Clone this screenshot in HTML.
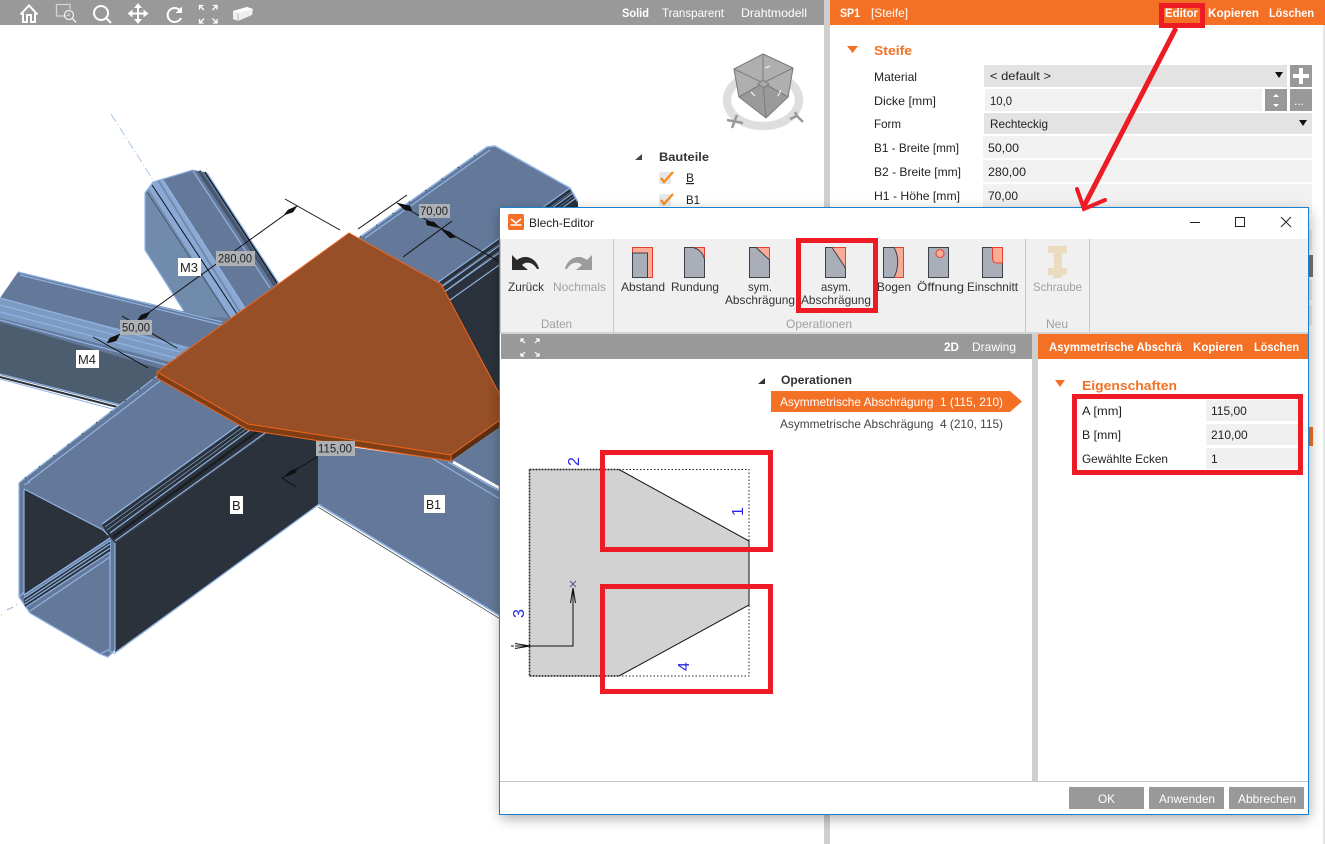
<!DOCTYPE html>
<html lang="de">
<head>
<meta charset="utf-8">
<title>Blech-Editor</title>
<style>
html,body{margin:0;padding:0;background:#fff;width:1325px;height:844px;overflow:hidden}
svg{display:block;position:absolute;left:0;top:0}
text{font-family:"Liberation Sans",sans-serif;font-size:12px;fill:#222;white-space:pre}
.w{fill:#fff}
.b{font-weight:bold}
.g{fill:#a0a0a0}
.o{fill:#f47025;font-weight:bold;font-size:13px}
.n{fill:#2424e6;font-size:16px}
.l{stroke:#8fb3e3;stroke-width:1.2;fill:none}
.d{stroke:#111;stroke-width:1;fill:none}
.r{fill:none;stroke:#ed1c24}
.ic{stroke:#3c4048;stroke-width:1;fill:#a9aeb8}
.h{fill:#f9ab96;stroke:#e8402f;stroke-width:1}
</style>
</head>
<body>
<svg width="1325" height="844" viewBox="0 0 1325 844" xmlns="http://www.w3.org/2000/svg">
<defs>
<filter id="s" x="-10%" y="-10%" width="120%" height="120%"><feGaussianBlur stdDeviation="7"/></filter>
</defs>
<rect width="1325" height="844" fill="#fff"/>

<!-- 3D scene -->
<g>
<!-- M3 -->
<path d="M145 193L153 182L193 170L205 172L280 287L240 325L187 316L150 258L145 250Z" fill="#64799a"/>
<path d="M145 193L148 188L232 318L187 316L150 258L145 250Z" fill="#708bab"/>
<path d="M148 188L153 182L163 180L245 308L232 320Z" fill="#8ba9d4"/>
<path d="M158 180L240 312" stroke="#708bab" stroke-width="2"/>
<path d="M145 250V193L153 182L193 170" class="l" stroke-width="1.500"/>
<path d="M145 250L187 316" class="l"/>
<path d="M152 185L237 314" stroke="#10151c" stroke-width="1"/>
<path d="M147 192L231 320" stroke="#3c4a5e" stroke-width=".7"/>
<path d="M163 180L245 308" class="l"/>
<path d="M193 171L270 288" class="l" stroke-width="1.500"/>
<path d="M199 171L275 285" stroke="#46566c" stroke-width="3.500"/>
<path d="M205 172L277 283" stroke="#10151c" stroke-width="1.500"/>
<path d="M207 173L280 285" class="l"/>

<!-- M4 -->
<path d="M18 272L228 322L160 372L0 322L0 298Z" fill="#64799a"/>
<path d="M0 298L190 347L170 362L0 318Z" fill="#7d9ac3"/>
<path d="M0 298L185 348M0 305L180 352M0 312L176 358M0 320L170 366" class="l"/>
<path d="M18 272L222 322M20 275L222 325" class="l"/>
<path d="M0 322L165 370L125 407L0 375Z" fill="#4c5d70"/>
<path d="M0 374L125 406" stroke="#8fb3e3" stroke-width="1.200"/>
<path d="M0 377L125 409" stroke="#2b323b" stroke-width="2"/>
<path d="M0 379L120 411" stroke="#8fb3e3" stroke-width="1"/>

<!-- upper right tube -->
<path d="M437 283L570 188L578 202L578 215L510 400L490 390Z" fill="#2b323b"/>
<path d="M355 240L360 237L487 147L495 146L570 188L437 283L420 300Z" fill="#64799a"/>
<path d="M360 237L487 147L495 146L570 188L578 202" stroke="#8fb3e3" stroke-width="1.500" fill="none"/>
<path d="M365 238L490 150" class="l"/>
<path d="M360 237L487 147" stroke="#111" stroke-width="1" stroke-dasharray="1 19"/>
<path d="M437 283L570 188M440 288L573 193M443 293L576 198M450 300L578 209" class="l"/>
<path d="M441 286L571 192M445 291L574 196" stroke="#8fb3e3" stroke-width=".5"/>

<!-- B1 -->
<path d="M300 440L451 461L510 420L510 622L318 505Z" fill="#64799a"/>
<path d="M318 504L510 622" stroke="#8fb3e3" stroke-width="1.500"/>
<path d="M318 507L510 625" stroke="#2b323b" stroke-width=".7"/>
<path d="M430 457L510 505" class="l"/>
<path d="M453 462L510 494" stroke="#fff" stroke-width="3"/>
<path d="M448 462L510 497" stroke="#8fb3e3" stroke-width="1.200"/>

<!-- B -->
<path d="M19 483L25 478L157 376L250 428L115 543L115 650L108 657L100 654L30 613L19 597Z" fill="#64799a"/>
<path d="M115 543L267 433L318 440L318 505L115 652Z" fill="#2b323b"/>
<path d="M102 525L240 425L267 433L115 543L108 535Z" fill="#2b323b"/>
<path d="M102 524L240 424M110 533L250 430M115 541L265 433" class="l"/>
<path d="M105 527L243 427M107 530L246 429" stroke="#8fb3e3" stroke-width=".6"/>
<path d="M113 537L258 431" stroke="#1a1f26" stroke-width="2.400"/>
<path d="M110 540V650M115 543V650" class="l"/>
<path d="M115 653L318 505" stroke="#8fb3e3" stroke-width="1.300"/>
<path d="M19 483L25 478L157 376M28 482L160 381" class="l" stroke-width="1.400"/>
<path d="M25 478L157 376" stroke="#111" stroke-dasharray="1 17"/>
<path d="M24 489L103 530L110 538L24 595Z" fill="#2b323b"/>
<path d="M24 489L103 530L108 535M19 483V597M24 489V595M19 597L30 613L100 654L108 657L115 650" class="l"/>
<path d="M24 485L30 482M19 597L24 592M100 654L108 650L115 654" class="l"/>
<path d="M24 595L110 538" class="l"/>
<path d="M24 598L110 541L110 552L25 607Z" fill="#2b323b"/>
<path d="M24 595L110 538M24 598L110 541M25 601L110 544M25 604L110 548M26 607L110 552M30 611L110 557" class="l" stroke-width="1"/>
<path d="M1 615H2M7 610L13 607M16 605L17 604" stroke="#9bbbe6"/>
<path d="M111 114L153 180" stroke="#a9c4ea" stroke-dasharray="9 3 1 3"/>

<!-- plate -->
<path d="M157 372L157 378L248 430L451 461L510 420L510 412L451 455L248 424Z" fill="#5b2e12"/>
<path d="M157 372L157 378L248 430L451 461L451 455L248 424Z" fill="#7f3f16"/>
<path d="M157 372L349 233L441 284L510 412L451 455L248 424Z" fill="#964f26"/>
<path d="M157 372L349 233L441 284L500 395" stroke="#f0641e" stroke-width="1" fill="none"/>
<path d="M157 372L157 378L248 430L451 461L451 455M157 372L248 424L451 455L500 420" stroke="#f0641e" stroke-width="1" fill="none"/>

<!-- dimensions -->
<path d="M285 199L340 230M297 206L137 321" class="d"/>
<path d="M284 215L288 210L297 206L293 212Z" fill="#111" stroke="#111" stroke-width=".5"/>
<path d="M137 321L141 315L150 312L146 318Z" fill="#111" stroke="#111" stroke-width=".5"/>
<path d="M93 337L148 368M122 316L177 348" class="d"/>
<path d="M107 343L110 338L120 334L116 341Z" fill="#111" stroke="#111" stroke-width=".5"/>
<path d="M358 229L407 195M403 257L452 221M397 203L500 262" class="d"/>
<path d="M397 203L410 206L412 211L405 210Z" fill="#111" stroke="#111" stroke-width=".5"/>
<path d="M440 228L427 225L426 221L434 222Z" fill="#111" stroke="#111" stroke-width=".5"/>
<path d="M441 229L450 232L456 237L450 238Z" fill="#111" stroke="#111" stroke-width=".5"/>
<path d="M317 457L282 478L296 487" class="d"/>
<path d="M284 477L290 471L298 468L295 473Z" fill="#111" stroke="#111" stroke-width=".5"/>

<rect x="216" y="251" width="39" height="15" fill="#adb0b4"/><text x="218" y="262.500" textLength="34" lengthAdjust="spacingAndGlyphs">280,00</text>
<rect x="120" y="320" width="32" height="15" fill="#adb0b4"/><text x="122" y="331.500" textLength="28" lengthAdjust="spacingAndGlyphs">50,00</text>
<rect x="316" y="441" width="39" height="15" fill="#adb0b4"/><text x="318" y="452.500" textLength="34" lengthAdjust="spacingAndGlyphs">115,00</text>
<rect x="419" y="204" width="31" height="14" fill="#adb0b4"/><text x="420" y="215" textLength="28" lengthAdjust="spacingAndGlyphs">70,00</text>
<rect x="178" y="258" width="23" height="18" fill="#fff"/><text x="180" y="272" font-size="13" style="font-size:13px" textLength="18" lengthAdjust="spacingAndGlyphs">M3</text>
<rect x="76" y="350" width="23" height="18" fill="#fff"/><text x="78" y="364" style="font-size:13px" textLength="18" lengthAdjust="spacingAndGlyphs">M4</text>
<rect x="230" y="496" width="13" height="18" fill="#fff"/><text x="232" y="510" style="font-size:13px">B</text>
<rect x="424" y="495" width="21" height="18" fill="#fff"/><text x="426" y="509" style="font-size:13px" textLength="15" lengthAdjust="spacingAndGlyphs">B1</text>
</g>

<!-- Cube -->
<ellipse cx="763" cy="100" rx="36" ry="26" fill="none" stroke="#dedede" stroke-width="8.500"/>
<path d="M763 54L793 68L788 97L766 118L739 97L734 69Z" fill="#9a9a9a" stroke="#7c7c7c"/>
<path d="M763 54L793 68L788 97L763 83L739 97L734 69Z" fill="#afafaf" stroke="#7c7c7c"/>
<path d="M763 54V83M734 69L763 83L793 68M739 97L763 83L788 97M763 83L766 118" stroke="#7c7c7c" fill="none"/>
<path d="M763 80L769 84L764 88L758 84Z" fill="#a8a8a8" stroke="#7c7c7c"/>
<path d="M765 68L770 66M751 92L755 96M778 96L781 90" stroke="#e8e8e8" stroke-width="1.300"/>
<path d="M727 120L743 123M737 115L732 128M790 119L797 116L803 122M797 116L795 112" stroke="#999" stroke-width="2.500" fill="none"/>

<!-- Tree -->
<path d="M635 160L642 154L642 160Z" fill="#444"/>
<text x="659" y="161" class="b" textLength="50" lengthAdjust="spacingAndGlyphs" style="fill:#333">Bauteile</text>
<rect x="659" y="172" width="12" height="12" rx="2" fill="#e6e6e6"/>
<path d="M661 178L664 182L673 172" stroke="#f58a1f" stroke-width="2.300" fill="none"/>
<text x="686" y="182" style="text-decoration:underline">B</text>
<rect x="659" y="194" width="12" height="12" rx="2" fill="#e6e6e6"/>
<path d="M661 200L664 204L673 194" stroke="#f58a1f" stroke-width="2.300" fill="none"/>
<text x="686" y="204" textLength="14" lengthAdjust="spacingAndGlyphs">B1</text>

<!-- Top toolbar -->
<rect x="0" y="0" width="824" height="25" fill="#999"/>
<g fill="none" stroke="#fff" stroke-width="2">
<path d="M20.500 14.500L29 5.500L37.500 14.500M23 13V22H27V15H31V22H35V13"/>
<path d="M66 16H56.500V4.500H70V9" stroke="#d4d4d4" stroke-width="1.300"/>
<circle cx="69" cy="15" r="4.500" stroke="#eee" stroke-width="1.300"/>
<path d="M72.500 18.500L76 22.500" stroke-width="1.300"/>
<path d="M69 13V15.500H67" stroke-width="1" stroke="#ddd"/>
<circle cx="101" cy="13" r="7"/>
<path d="M106 18L111 23"/>
<path d="M138 5V22M129 13.500H147"/>
</g>
<path d="M138 3L142 8H134ZM138 24L134 19H142ZM127.500 13.500L132.500 9.500V17.500ZM148.500 13.500L143.500 17.500V9.500Z" fill="#fff"/>
<path d="M181 12A7 7 0 1 0 181 18" fill="none" stroke="#fff" stroke-width="2"/>
<path d="M182 6.500V13H175.500Z" fill="#fff"/>
<path d="M199.500 5.500L204 10M217 5.500L212.500 10M199.500 23L204 18.500M217 23L212.500 18.500M199.500 9.500V5.500H203.500M213 5.500H217V9.500M199.500 19V23H203.500M213 23H217V19" stroke="#fff" stroke-width="1.300" fill="none"/>
<path d="M233 11L247 7L253 9L252 15L238 21L233 19Z" fill="#eee"/>
<path d="M233 11L238 13L253 9L247 7Z" fill="#fff"/>
<path d="M238 13V21" stroke="#bbb"/>
<text x="622" y="17" class="w b" textLength="27" lengthAdjust="spacingAndGlyphs">Solid</text>
<text x="662" y="17" class="w" textLength="62" lengthAdjust="spacingAndGlyphs">Transparent</text>
<text x="741" y="17" class="w" textLength="66" lengthAdjust="spacingAndGlyphs">Drahtmodell</text>

<!-- Splitter -->
<rect x="824" y="0" width="6" height="844" fill="#cfcfcf"/>

<!-- Right panel -->
<rect x="830" y="0" width="495" height="25" fill="#f47025"/>
<rect x="1323" y="25" width="2" height="819" fill="#e4e4e4"/>
<text x="840" y="17" class="w b" textLength="20" lengthAdjust="spacingAndGlyphs">SP1</text>
<text x="871" y="17" class="w" textLength="37" lengthAdjust="spacingAndGlyphs">[Steife]</text>
<text x="1165" y="17" class="w b" textLength="33" lengthAdjust="spacingAndGlyphs">Editor</text>
<text x="1208" y="17" class="w b" textLength="51" lengthAdjust="spacingAndGlyphs">Kopieren</text>
<text x="1269" y="17" class="w b" textLength="45" lengthAdjust="spacingAndGlyphs">Löschen</text>
<path d="M847 46H858L852.500 53Z" fill="#f47025"/>
<text x="874" y="55" class="o" textLength="38" lengthAdjust="spacingAndGlyphs">Steife</text>
<rect x="984" y="65" width="303" height="22" fill="#e3e3e3"/>
<rect x="1290" y="65" width="22" height="22" fill="#999"/>
<path d="M1301 68V84M1293 76H1309" stroke="#fff" stroke-width="4"/>
<rect x="985" y="89" width="277" height="22" fill="#f1f1f1"/>
<rect x="1265" y="89" width="22" height="22" fill="#999"/>
<path d="M1276 94L1279 97H1273ZM1276 107L1273 104H1279Z" fill="#fff"/>
<rect x="1290" y="89" width="22" height="22" fill="#999"/>
<text x="1294" y="105" class="w" font-size="10">...</text>
<rect x="984" y="113" width="328" height="21" fill="#e3e3e3"/>
<rect x="983" y="136" width="329" height="22" fill="#f1f1f1"/>
<rect x="983" y="160" width="329" height="22" fill="#f1f1f1"/>
<rect x="983" y="184" width="329" height="30" fill="#f1f1f1"/>
<path d="M1275 72H1283L1279 78ZM1299 120H1307L1303 126Z" fill="#111"/>
<text x="874" y="81" textLength="43" lengthAdjust="spacingAndGlyphs">Material</text>
<text x="874" y="105" textLength="62" lengthAdjust="spacingAndGlyphs">Dicke [mm]</text>
<text x="874" y="128" textLength="27" lengthAdjust="spacingAndGlyphs">Form</text>
<text x="874" y="152" textLength="85" lengthAdjust="spacingAndGlyphs">B1 - Breite [mm]</text>
<text x="874" y="176" textLength="87" lengthAdjust="spacingAndGlyphs">B2 - Breite [mm]</text>
<text x="874" y="200" textLength="86" lengthAdjust="spacingAndGlyphs">H1 - Höhe [mm]</text>
<text x="990" y="80" textLength="61" lengthAdjust="spacingAndGlyphs">&lt; default &gt;</text>
<text x="990" y="105" textLength="22" lengthAdjust="spacingAndGlyphs">10,0</text>
<text x="990" y="128" textLength="58" lengthAdjust="spacingAndGlyphs">Rechteckig</text>
<text x="988" y="152" textLength="31" lengthAdjust="spacingAndGlyphs">50,00</text>
<text x="988" y="176" textLength="38" lengthAdjust="spacingAndGlyphs">280,00</text>
<text x="988" y="200" textLength="30" lengthAdjust="spacingAndGlyphs">70,00</text>
<rect x="1309" y="255" width="4" height="22" fill="#777"/>
<rect x="1309" y="427" width="4" height="19" fill="#f47025"/>
<rect x="1309" y="230" width="3" height="20" fill="#eee"/>
<rect x="1309" y="280" width="3" height="20" fill="#eee"/>
<rect x="1309" y="305" width="3" height="20" fill="#eee"/>

<!-- Dialog -->
<rect x="501" y="212" width="808" height="606" fill="#000" opacity=".35" filter="url(#s)"/>
<rect x="499.500" y="207.500" width="809" height="607" fill="#fff" stroke="#1a80d0"/>
<rect x="508" y="214" width="16" height="16" rx="1.500" fill="#f47025"/>
<path d="M511 219L516 223L521 219M510.500 225H521.500" stroke="#fff" stroke-width="1.500" fill="none"/>
<text x="529" y="227" textLength="65" lengthAdjust="spacingAndGlyphs">Blech-Editor</text>
<path d="M1190 222.500H1200" stroke="#222"/>
<rect x="1235.500" y="217.500" width="9" height="9" fill="none" stroke="#222"/>
<path d="M1281 217L1291 227M1291 217L1281 227" stroke="#222"/>

<rect x="500" y="239" width="808" height="93" fill="#f0f0f0"/>
<rect x="500" y="332" width="808" height="2" fill="#d4d4d4"/>
<path d="M500.500 239V332M613.500 239V332M1025.500 239V332M1089.500 239V332" stroke="#c8c8c8"/>

<!-- undo / redo -->
<path d="M512 255V270H528L522 265C526 261 533 262 537 269H539C537 259 526 253 517 260Z" fill="#2a2a2a"/>
<path d="M592 255V270H576L582 265C578 261 571 262 567 269H565C567 259 578 253 587 260Z" fill="#9c9c9c"/>

<!-- op icons -->
<rect x="632.500" y="247.500" width="20" height="30" class="h"/>
<rect x="632.500" y="253" width="15" height="24.500" class="ic"/>
<rect x="684.500" y="247.500" width="20" height="30" class="h"/>
<path d="M684.500 247.500H693C699 249 704 254 704.500 260V277.500H684.500Z" class="ic"/>
<rect x="749.500" y="247.500" width="20" height="30" class="h"/>
<path d="M749.500 247.500H756L769.500 260V277.500H749.500Z" class="ic"/>
<rect x="825.500" y="247.500" width="20" height="30" class="h"/>
<path d="M825.500 247.500H832L845.500 268V277.500H825.500Z" class="ic"/>
<rect x="883.500" y="247.500" width="20" height="30" class="h"/>
<path d="M883.500 247.500H894C899 256 899 268 894 277.500H883.500Z" class="ic"/>
<rect x="928.500" y="247.500" width="20" height="30" class="ic"/>
<circle cx="940" cy="253.500" r="4" class="h"/>
<rect x="982.500" y="247.500" width="20" height="30" class="ic"/>
<path d="M992.500 247.500H1002.500V263H997C994 263 992.500 261 992.500 258Z" class="h"/>
<g fill="#e9dcbf">
<rect x="1048" y="246" width="19" height="7"/><rect x="1048" y="268" width="19" height="7"/>
<rect x="1054" y="253" width="8" height="15"/><rect x="1053" y="275" width="9" height="3"/>
</g>

<text x="508" y="291" textLength="36" lengthAdjust="spacingAndGlyphs" style="fill:#333">Zurück</text>
<text x="553" y="291" class="g" textLength="53" lengthAdjust="spacingAndGlyphs">Nochmals</text>
<text x="621" y="291" textLength="44" lengthAdjust="spacingAndGlyphs" style="fill:#333">Abstand</text>
<text x="671" y="291" textLength="48" lengthAdjust="spacingAndGlyphs" style="fill:#333">Rundung</text>
<text x="748" y="291" textLength="24" lengthAdjust="spacingAndGlyphs" style="fill:#333">sym.</text>
<text x="725" y="304" textLength="70" lengthAdjust="spacingAndGlyphs" style="fill:#333">Abschrägung</text>
<text x="821" y="291" textLength="30" lengthAdjust="spacingAndGlyphs" style="fill:#333">asym.</text>
<text x="801" y="304" textLength="70" lengthAdjust="spacingAndGlyphs" style="fill:#333">Abschrägung</text>
<text x="877" y="291" textLength="34" lengthAdjust="spacingAndGlyphs" style="fill:#333">Bogen</text>
<text x="917" y="291" textLength="47" lengthAdjust="spacingAndGlyphs" style="fill:#333">Öffnung</text>
<text x="967" y="291" textLength="51" lengthAdjust="spacingAndGlyphs" style="fill:#333">Einschnitt</text>
<text x="1033" y="291" class="g" textLength="49" lengthAdjust="spacingAndGlyphs">Schraube</text>
<text x="541" y="328" class="g" textLength="31" lengthAdjust="spacingAndGlyphs">Daten</text>
<text x="786" y="328" class="g" textLength="66" lengthAdjust="spacingAndGlyphs">Operationen</text>
<text x="1046" y="328" class="g" textLength="22" lengthAdjust="spacingAndGlyphs">Neu</text>

<!-- Dialog content headers -->
<rect x="501" y="334" width="531" height="25" fill="#999"/>
<rect x="1032" y="334" width="6" height="447" fill="#cfcfcf"/>
<rect x="1038" y="334" width="270" height="25" fill="#f47025"/>
<rect x="500" y="781" width="808" height="1" fill="#c4c4c4"/>
<path d="M521 339L525 343M539 339L535 343M521 356L525 352M539 356L535 352M521 342V339H524M536 339H539V342M521 353V356H524M536 356H539V353" stroke="#fff" stroke-width="1.200" fill="none"/>
<text x="944" y="351" class="w b" textLength="15" lengthAdjust="spacingAndGlyphs">2D</text>
<text x="972" y="351" class="w" textLength="44" lengthAdjust="spacingAndGlyphs">Drawing</text>
<text x="1049" y="351" class="w b" textLength="133" lengthAdjust="spacingAndGlyphs">Asymmetrische Abschrä</text>
<text x="1193" y="351" class="w b" textLength="50" lengthAdjust="spacingAndGlyphs">Kopieren</text>
<text x="1254" y="351" class="w b" textLength="45" lengthAdjust="spacingAndGlyphs">Löschen</text>

<!-- Operations list -->
<path d="M758 384L765 378V384Z" fill="#333"/>
<text x="781" y="384" class="b" textLength="71" lengthAdjust="spacingAndGlyphs" style="fill:#333">Operationen</text>
<path d="M771 391H1010L1022 401.500L1010 412H771Z" fill="#f47025"/>
<text x="780" y="406" class="w" textLength="223" lengthAdjust="spacingAndGlyphs">Asymmetrische Abschrägung  1 (115, 210)</text>
<text x="780" y="428" textLength="223" lengthAdjust="spacingAndGlyphs" style="fill:#444">Asymmetrische Abschrägung  4 (210, 115)</text>

<!-- Drawing -->
<path d="M529.500 469.500H619L749 541V605L619 676H529.500Z" fill="#d2d2d2"/>
<path d="M619 469.500H749V676H619" fill="none" stroke="#222" stroke-dasharray="1.500 2"/>
<path d="M529.500 469.500H619M529.500 469.500V676M529.500 676H619" fill="none" stroke="#222" stroke-width="1.500" stroke-dasharray="2 1"/>
<path d="M619 469.500L749 541V605L619 676" fill="none" stroke="#111"/>
<path d="M515 646H573V590" fill="none" stroke="#111"/>
<path d="M530 646L515 643.500M530 646L515 648.500M573 588L570.500 603M573 588L575.500 603" stroke="#111" fill="none"/>
<path d="M511 646H514" stroke="#111"/>
<path d="M570 581L576 587M576 581L570 587" stroke="#6a4a8a"/>
<text class="n" transform="translate(579,466) rotate(-90)">2</text>
<text class="n" transform="translate(743,516) rotate(-90)">1</text>
<text class="n" transform="translate(524,618) rotate(-90)">3</text>
<text class="n" transform="translate(689,671) rotate(-90)">4</text>

<!-- Properties -->
<path d="M1055 380H1065L1060 387Z" fill="#f47025"/>
<text x="1082" y="390" class="o" textLength="95" lengthAdjust="spacingAndGlyphs">Eigenschaften</text>
<rect x="1206" y="400" width="92" height="21" fill="#f0f0f0"/>
<rect x="1206" y="424" width="92" height="21" fill="#f0f0f0"/>
<rect x="1206" y="448" width="92" height="21" fill="#f0f0f0"/>
<text x="1082" y="415" textLength="40" lengthAdjust="spacingAndGlyphs">A [mm]</text>
<text x="1082" y="439" textLength="39" lengthAdjust="spacingAndGlyphs">B [mm]</text>
<text x="1082" y="463" textLength="86" lengthAdjust="spacingAndGlyphs">Gewählte Ecken</text>
<text x="1211" y="415">115,00</text>
<text x="1211" y="439">210,00</text>
<text x="1211" y="463">1</text>

<!-- Bottom buttons -->
<rect x="1069" y="787" width="75" height="22" fill="#999"/>
<rect x="1149" y="787" width="75" height="22" fill="#999"/>
<rect x="1229" y="787" width="75" height="22" fill="#999"/>
<text x="1098" y="803" class="w" textLength="17" lengthAdjust="spacingAndGlyphs">OK</text>
<text x="1159" y="803" class="w" textLength="56" lengthAdjust="spacingAndGlyphs">Anwenden</text>
<text x="1238" y="803" class="w" textLength="58" lengthAdjust="spacingAndGlyphs">Abbrechen</text>

<!-- Red arrow -->
<path d="M1176 28L1083 208" class="r" stroke-width="5"/>
<path d="M1077 189L1084 209L1105 200" class="r" stroke-width="4" stroke-linecap="round"/>

<!-- Red highlight boxes -->
<rect x="1161.500" y="5.500" width="41" height="20" class="r" stroke-width="5"/>
<rect x="798.500" y="240.500" width="77" height="70" class="r" stroke-width="5"/>
<rect x="602.500" y="452.500" width="168" height="97" class="r" stroke-width="5"/>
<rect x="602.500" y="586.500" width="168" height="105" class="r" stroke-width="5"/>
<rect x="1074.500" y="396.500" width="226" height="76" class="r" stroke-width="5"/>
</svg>
</body>
</html>
